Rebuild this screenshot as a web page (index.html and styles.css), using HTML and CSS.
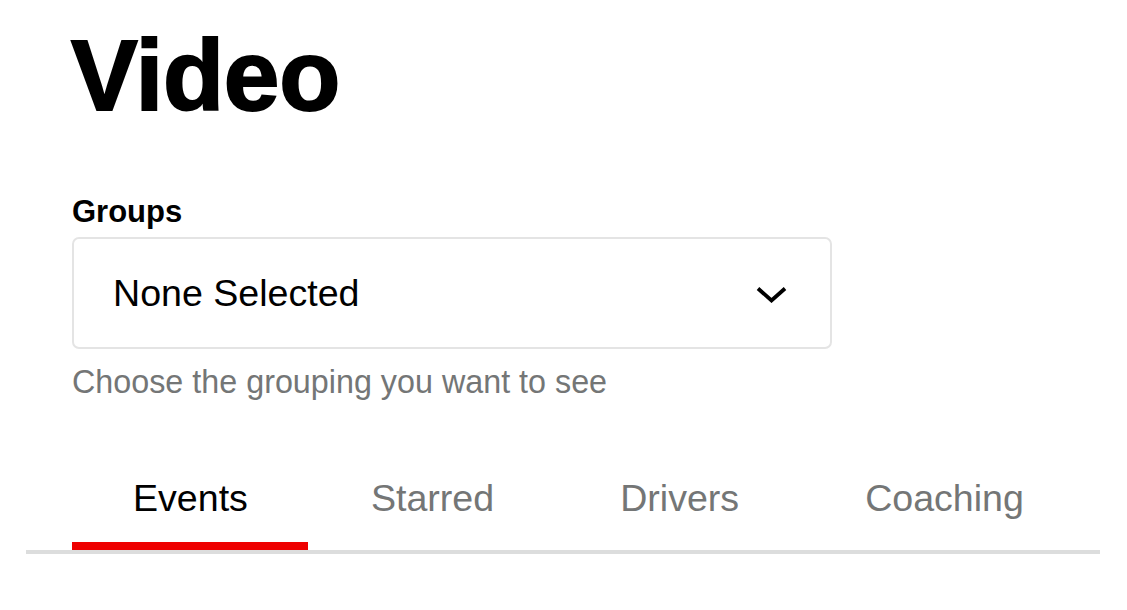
FILE: index.html
```html
<!DOCTYPE html>
<html lang="en">
<head>
<meta charset="utf-8">
<title>Video</title>
<link rel="stylesheet" href="styles.css">
</head>
<body>
<main class="page">
  <h1 class="title">Video</h1>
  <label class="label">Groups</label>
  <div class="select">
    <span class="select-value">None Selected</span>
    <svg class="chevron" width="31" height="17" viewBox="0 0 31 17" aria-hidden="true">
      <path d="M2 2.5 L15.5 14.5 L29 2.5" fill="none" stroke="#000" stroke-width="3.8" stroke-linecap="butt" stroke-linejoin="miter"/>
    </svg>
  </div>
  <p class="helper">Choose the grouping you want to see</p>
  <nav class="tabs">
    <div class="tab active">Events</div>
    <div class="tab">Starred</div>
    <div class="tab">Drivers</div>
    <div class="tab">Coaching</div>
  </nav>
</main>
</body>
</html>
```

FILE: styles.css
```css
html, body {
  margin: 0;
  padding: 0;
  background: #ffffff;
}

body {
  font-family: "Liberation Sans", Arial, Helvetica, sans-serif;
  color: #000000;
}

.page {
  padding-left: 72px;
  padding-top: 25px;
}

.title {
  margin: 0;
  font-size: 100px;
  line-height: 100px;
  font-weight: 700;
  letter-spacing: -0.3px;
  margin-left: -1px;
  -webkit-text-stroke: 2px #000000;
}

.label {
  display: block;
  margin-top: 69px;
  font-size: 31px;
  line-height: 36px;
  font-weight: 700;
}

.select {
  box-sizing: border-box;
  margin-top: 7px;
  width: 760px;
  height: 112px;
  border: 2px solid #e4e4e4;
  border-radius: 7px;
  display: flex;
  align-items: center;
  justify-content: space-between;
  padding: 0 43px 0 39px;
}

.select-value {
  font-size: 37.6px;
  line-height: 44px;
  color: #000000;
}

.chevron {
  display: block;
  flex: none;
  margin-top: 2px;
}

.helper {
  margin: 14px 0 0 0;
  font-size: 32.3px;
  line-height: 38px;
  color: #747676;
}

.tabs {
  display: flex;
  margin-top: 75px;
  margin-left: -46px;
  padding-left: 46px;
  width: 1028px;
  border-bottom: 4px solid #dcdddd;
  box-shadow: 0 4px 0 #f2f2f2;
}

.tab {
  font-size: 37.6px;
  line-height: 44px;
  padding: 0 63px 22px 63px;
  border-bottom: 8px solid transparent;
  color: #747676;
}

.tab.active {
  color: #000000;
  border-bottom-color: #ee0000;
  padding-left: 61px;
  padding-right: 60px;
}
```
